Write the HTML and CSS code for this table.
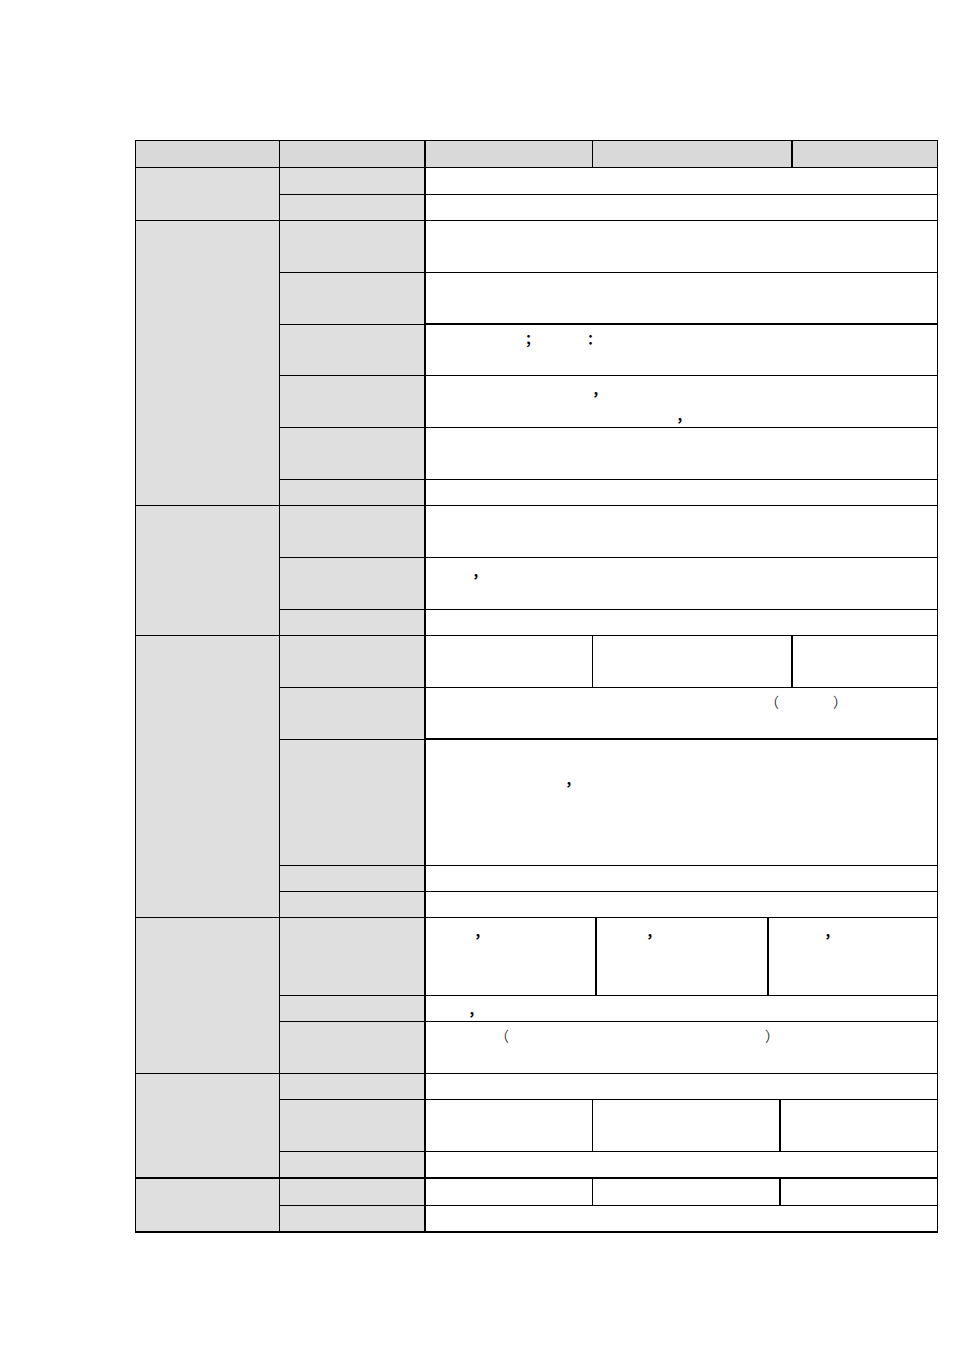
FILE: index.html
```html
<!DOCTYPE html>
<html lang="zh-CN">
<head>
<meta charset="utf-8">
<title>表格</title>
<link rel="stylesheet" href="styles.css">
</head>
<body>
<div class="sheet">
  <!-- header -->
  <div class="c hd"></div>
  <div class="c hd lab"></div>
  <div class="c hd s1 rb1"></div>
  <div class="c hd s4 rb2"></div>
  <div class="c hd s1"></div>

  <!-- group 1 -->
  <div class="c grp g2"></div>
  <div class="c lab"></div><div class="c s6"></div>
  <div class="c lab"></div><div class="c s6"></div>

  <!-- group 2 -->
  <div class="c grp g6"></div>
  <div class="c lab"></div><div class="c s6"></div>
  <div class="c lab"></div><div class="c s6 bb2"></div>
  <div class="c lab"></div><div class="c s6"><span class="m99">；</span><span class="m55">：</span></div>
  <div class="c lab"></div><div class="c s6"><span class="m166">，</span><br><span class="m250">，</span></div>
  <div class="c lab"></div><div class="c s6"></div>
  <div class="c lab"></div><div class="c s6"></div>

  <!-- group 3 -->
  <div class="c grp g3"></div>
  <div class="c lab"></div><div class="c s6"></div>
  <div class="c lab"></div><div class="c s6"><span class="m46">，</span></div>
  <div class="c lab"></div><div class="c s6"></div>

  <!-- group 4 -->
  <div class="c grp g5"></div>
  <div class="c lab"></div><div class="c s1 rb1"></div><div class="c s4 rb2"></div><div class="c s1"></div>
  <div class="c lab"></div><div class="c s6 bb2"><span class="m339 thin">（</span><span class="m54 thin">）</span></div>
  <div class="c lab"></div><div class="c s6">&nbsp;<br><span class="m139">，</span></div>
  <div class="c lab"></div><div class="c s6"></div>
  <div class="c lab"></div><div class="c s6"></div>

  <!-- group 5 -->
  <div class="c grp g3"></div>
  <div class="c lab"></div><div class="c s2 rb2"><span class="m48">，</span></div><div class="c s1 rb2"><span class="m49">，</span></div><div class="c s3"><span class="m55">，</span></div>
  <div class="c lab"></div><div class="c s6"><span class="m42">，</span></div>
  <div class="c lab"></div><div class="c s6"><span class="m69 thin">（</span><span class="m256 thin">）</span></div>

  <!-- group 6 -->
  <div class="c grp g3 bb2"></div>
  <div class="c lab"></div><div class="c s6"></div>
  <div class="c lab"></div><div class="c s1 rb1"></div><div class="c s3 rb2"></div><div class="c s2"></div>
  <div class="c lab bb2"></div><div class="c s6 bb2"></div>

  <!-- group 7 -->
  <div class="c grp g2 bb2"></div>
  <div class="c lab"></div><div class="c s1 rb1"></div><div class="c s3 rb2"></div><div class="c s2"></div>
  <div class="c lab bb2"></div><div class="c s6 bb2"></div>
</div>
</body>
</html>
```

FILE: styles.css
```css
html, body {
  margin: 0;
  padding: 0;
  background: #ffffff;
}

body {
  font-family: "Noto Sans CJK SC", "Noto Sans", sans-serif;
  font-size: 14px;
  line-height: 26px;
  font-weight: 700;
  color: #000000;
}

.thin {
  font-weight: 400;
  color: #333333;
}

.sheet {
  margin: 140px 0 0 135px;
  width: 803px;
  box-sizing: border-box;
  border-top: 1px solid #000;
  border-left: 1px solid #000;
  display: grid;
  grid-template-columns: 144px 146px 167px 4px 172px 12px 12px 145px;
  grid-template-rows:
    27px 27px 26px
    52px 52px 51px 52px 52px 26px
    52px 52px 26px
    52px 52px 126px 26px 26px
    78px 26px 52px
    26px 52px 27px
    27px 27px;
}

.c {
  box-sizing: border-box;
  border-right: 1px solid #000;
  border-bottom: 1px solid #000;
  overflow: hidden;
  white-space: nowrap;
  background: #ffffff;
}

.hd { background: #d9d9d9; }

.grp {
  grid-column: 1;
  background: #dfdfdf;
}
.g2 { grid-row: span 2; }
.g3 { grid-row: span 3; }
.g5 { grid-row: span 5; }
.g6 { grid-row: span 6; }

.lab {
  grid-column: 2;
  background: #dfdfdf;
  border-right-width: 2px;
}
.hd.lab { background: #d9d9d9; }

.s1 { grid-column: span 1; }
.s2 { grid-column: span 2; }
.s3 { grid-column: span 3; }
.s4 { grid-column: span 4; }
.s6 { grid-column: span 6; }

.rb1 { border-right-width: 1px; }
.rb2 { border-right-width: 2px; }
.bb2 { border-bottom-width: 2px; }

.m42 { margin-left: 42px; }
.m46 { margin-left: 46px; }
.m48 { margin-left: 48px; }
.m49 { margin-left: 49px; }
.m54 { margin-left: 54px; }
.m55 { margin-left: 55px; }
.m69 { margin-left: 69px; }
.m99 { margin-left: 99px; }
.m139 { margin-left: 139px; }
.m166 { margin-left: 166px; }
.m250 { margin-left: 250px; }
.m256 { margin-left: 256px; }
.m339 { margin-left: 339px; }
```
